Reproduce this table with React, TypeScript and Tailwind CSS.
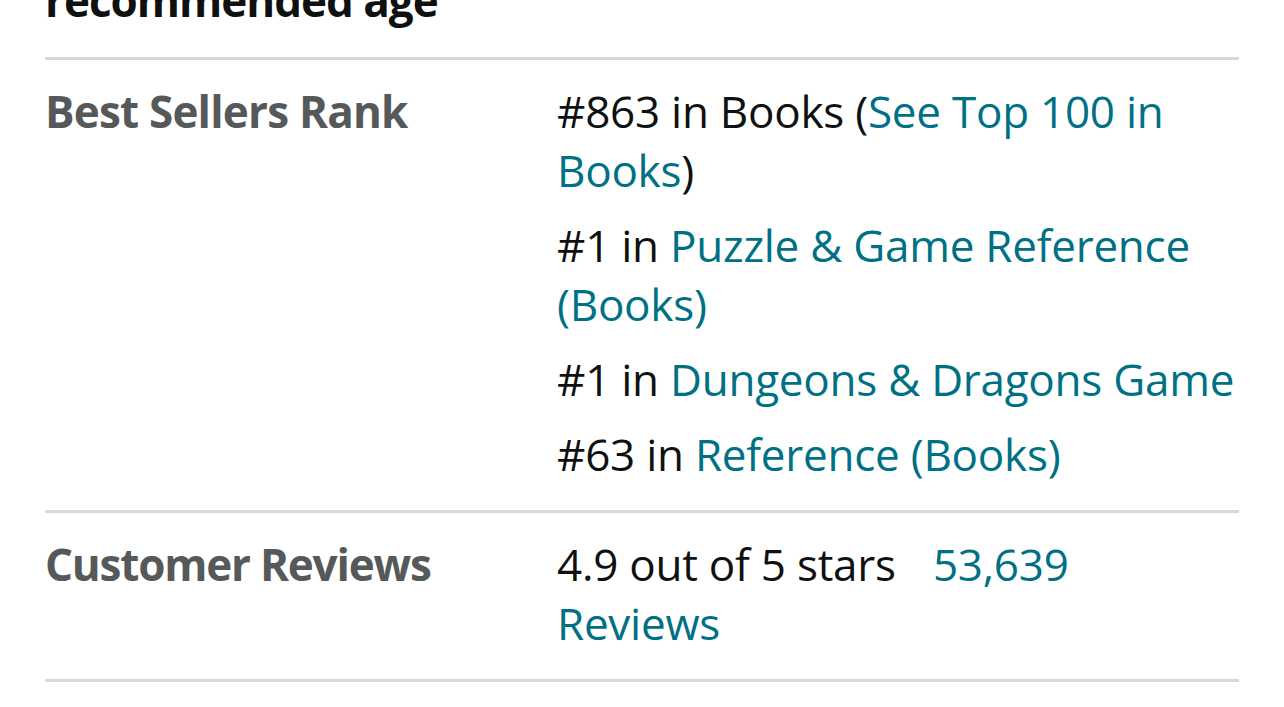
const ranks = [
  { pre: '#863 in Books (', link: 'See Top 100 in Books', post: ')' },
  { pre: '#1 in ', link: 'Puzzle & Game Reference (Books)', post: '' },
  { pre: '#1 in ', link: 'Dungeons & Dragons Game', post: '' },
  { pre: '#63 in ', link: 'Reference (Books)', post: '' },
]

export default function App() {
  return (
    <div
      className="h-[707px] w-full overflow-hidden bg-white px-[45px] text-[44px] leading-[59px] text-[#0f1111]"
      style={{ fontFamily: '"Open Sans", "Noto Sans", sans-serif' }}
    >
      <div className="-mt-[29px] pb-[27px] font-bold tracking-[-1px]">recommended age</div>

      <div className="grid grid-cols-[512px_1fr] border-t-[3px] border-[#d5d9d9] pt-[22px] pb-[26px]">
        <div className="font-bold tracking-[-0.8px] text-[#565959]">Best Sellers Rank</div>
        <ul className="flex flex-col gap-[16px] tracking-[-0.25px]">
          {ranks.map((r, i) => (
            <li key={i}>
              {r.pre}
              <a className="text-[#007185]">{r.link}</a>
              {r.post}
            </li>
          ))}
        </ul>
      </div>

      <div className="grid grid-cols-[512px_1fr] border-y-[3px] border-[#d5d9d9] pt-[22px] pb-[26px]">
        <div className="font-bold tracking-[-1.2px] text-[#565959]">Customer Reviews</div>
        <div className="tracking-[-0.25px]">
          4.9 out of 5 stars{' '}
          <a className="ml-[26px] text-[#007185]">53,639 Reviews</a>
        </div>
      </div>
    </div>
  )
}
